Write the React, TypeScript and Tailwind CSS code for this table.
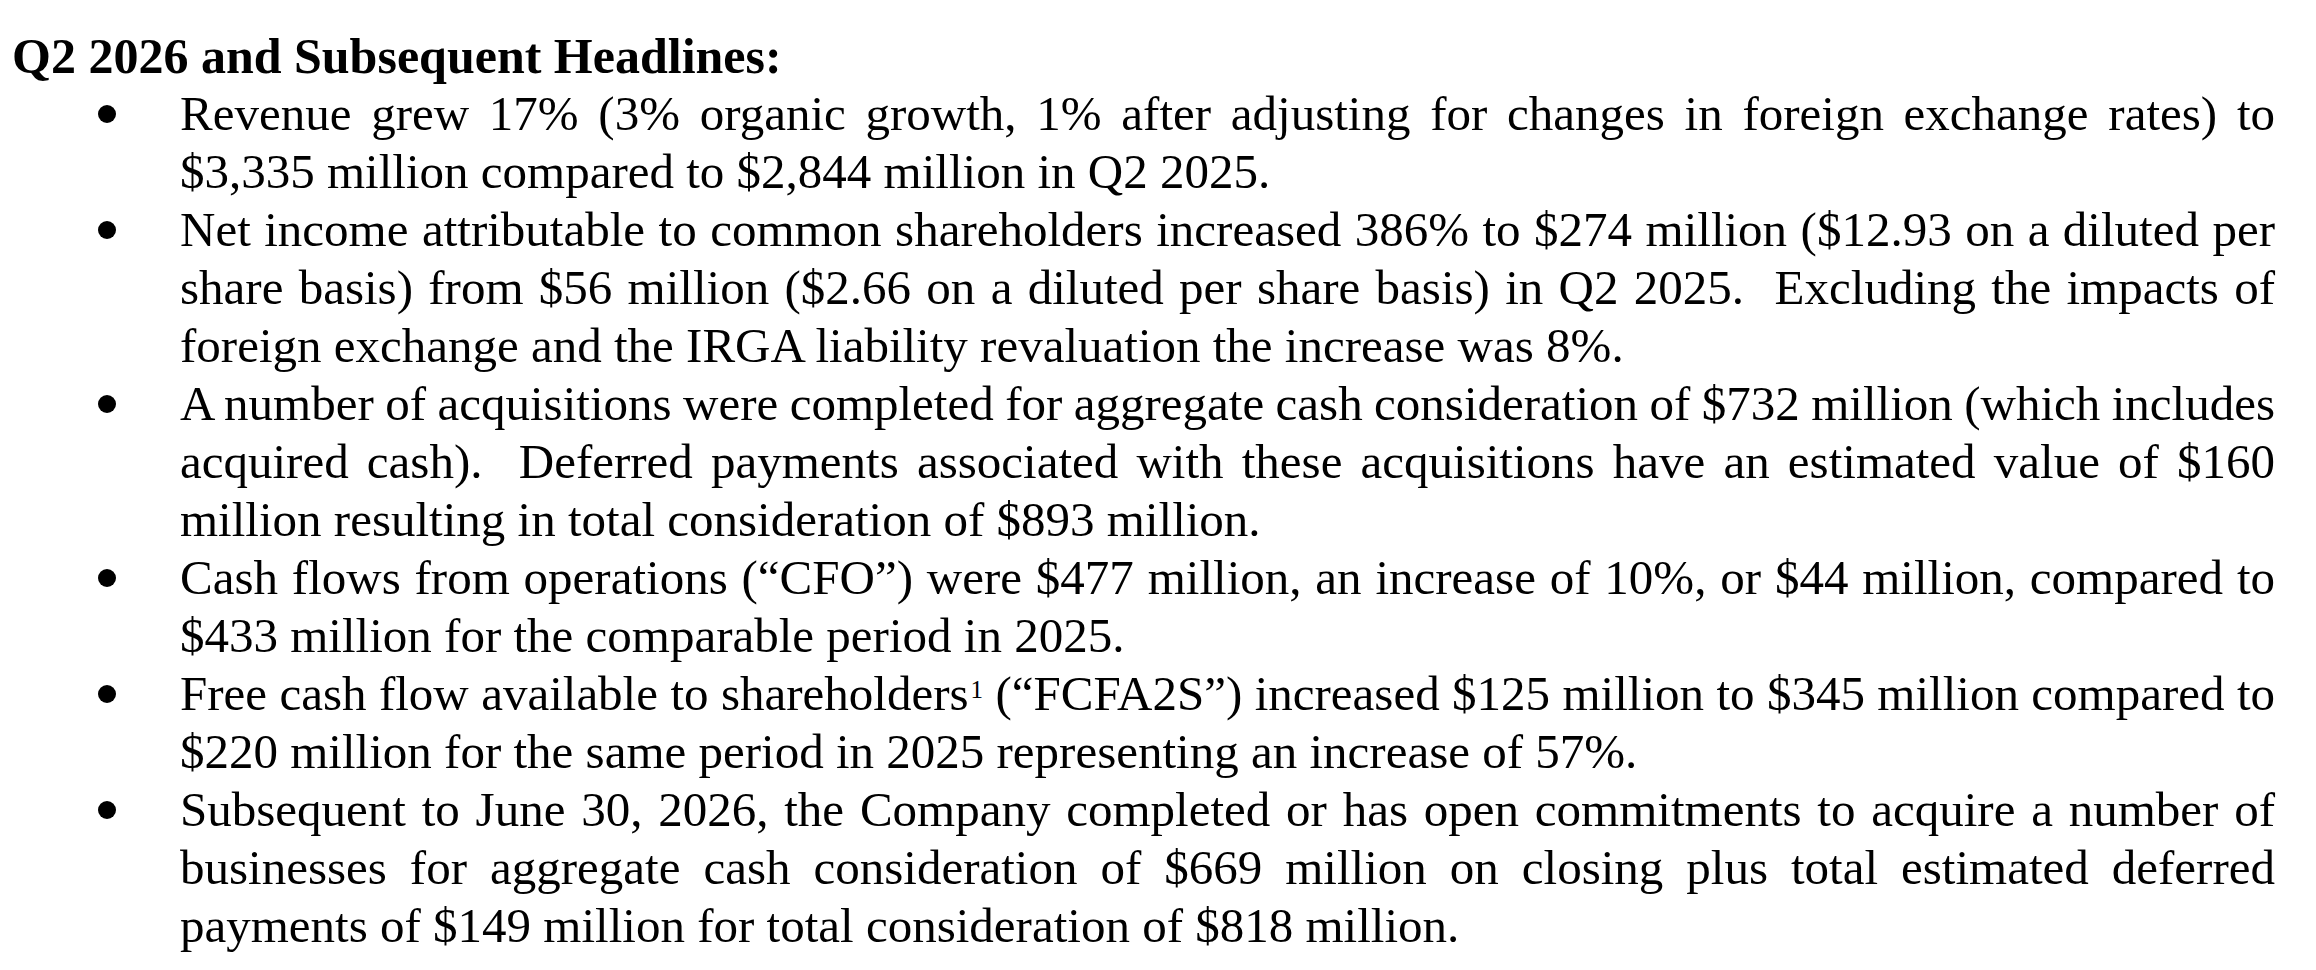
const headlines: string[][] = [
  [
    "Revenue grew 17% (3% organic growth, 1% after adjusting for changes in foreign exchange rates) to",
    "$3,335 million compared to $2,844 million in Q2 2025.",
  ],
  [
    "Net income attributable to common shareholders increased 386% to $274 million ($12.93 on a diluted per",
    "share basis) from $56 million ($2.66 on a diluted per share basis) in Q2 2025.\u00a0 Excluding the impacts of",
    "foreign exchange and the IRGA liability revaluation the increase was 8%.",
  ],
  [
    "A number of acquisitions were completed for aggregate cash consideration of $732 million (which includes",
    "acquired cash).\u00a0 Deferred payments associated with these acquisitions have an estimated value of $160",
    "million resulting in total consideration of $893 million.",
  ],
  [
    "Cash flows from operations (\u201cCFO\u201d) were $477 million, an increase of 10%, or $44 million, compared to",
    "$433 million for the comparable period in 2025.",
  ],
  [
    "FCFA2S",
    "$220 million for the same period in 2025 representing an increase of 57%.",
  ],
  [
    "Subsequent to June 30, 2026, the Company completed or has open commitments to acquire a number of",
    "businesses for aggregate cash consideration of $669 million on closing plus total estimated deferred",
    "payments of $149 million for total consideration of $818 million.",
  ],
];

// lines are kept as in the source document, justified except the last one
function Line({ children, last }: { children: React.ReactNode; last: boolean }) {
  return (
    <span
      className={
        last
          ? "block whitespace-nowrap text-left"
          : "block text-justify [text-align-last:justify] [word-spacing:-8px]"
      }
    >
      {children}
    </span>
  );
}

export default function App() {
  return (
    <main
      className="min-h-screen bg-white pt-[27px] pl-[12px] pr-[41px] text-black"
      style={{ fontFamily: '"Liberation Serif", "Times New Roman", serif' }}
    >
      <div className="leading-[58px]">
        <h2 className="text-[50px] font-bold">Q2 2026 and Subsequent Headlines:</h2>
        <ul className="text-[49px]">
          {headlines.map((lines, i) => (
            <li key={i} className="flex">
              <span className="flex h-[58px] w-[168px] shrink-0 items-center pl-[86px]">
                <span className="h-[18px] w-[18px] rounded-full bg-black" />
              </span>
              <div className="min-w-0 flex-1">
                {lines.map((line, j) => {
                  const last = j === lines.length - 1;
                  if (line === "FCFA2S") {
                    return (
                      <Line key={j} last={false}>
                        Free cash flow available to shareholders
                        <sup className="ml-[2px] text-[25px] leading-none">1</sup> (“FCFA2S”) increased
                        $125 million to $345 million compared to
                      </Line>
                    );
                  }
                  return (
                    <Line key={j} last={last}>
                      {line}
                    </Line>
                  );
                })}
              </div>
            </li>
          ))}
        </ul>
      </div>
    </main>
  );
}
